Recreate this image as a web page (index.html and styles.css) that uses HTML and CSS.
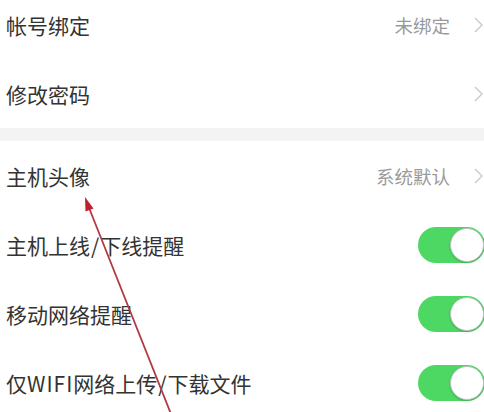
FILE: index.html
```html
<!DOCTYPE html>
<html lang="zh-CN">
<head>
<meta charset="utf-8">
<title>设置</title>
<link rel="stylesheet" href="styles.css">
</head>
<body>
<div class="page">
  <div class="group first">
    <div class="row">
      <span class="label">帐号绑定</span>
      <span class="value">未绑定</span>
      <svg class="chev" width="9" height="16" viewBox="0 0 9 16"><polyline points="1,1 8,8 1,15" fill="none" stroke="#c9c9cc" stroke-width="1.4"/></svg>
    </div>
    <div class="row">
      <span class="label">修改密码</span>
      <svg class="chev" width="9" height="16" viewBox="0 0 9 16"><polyline points="1,1 8,8 1,15" fill="none" stroke="#c9c9cc" stroke-width="1.4"/></svg>
    </div>
  </div>
  <div class="gap"></div>
  <div class="group">
    <div class="row">
      <span class="label">主机头像</span>
      <span class="value">系统默认</span>
      <svg class="chev" width="9" height="16" viewBox="0 0 9 16"><polyline points="1,1 8,8 1,15" fill="none" stroke="#c9c9cc" stroke-width="1.4"/></svg>
    </div>
    <div class="row">
      <span class="label">主机上线<span class="slash">/</span>下线提醒</span>
      <span class="toggle"><span class="knob"></span></span>
    </div>
    <div class="row">
      <span class="label">移动网络提醒</span>
      <span class="toggle"><span class="knob"></span></span>
    </div>
    <div class="row">
      <span class="label">仅<span class="latin">WIFI</span>网络上传<span class="slash">/</span>下载文件</span>
      <span class="toggle"><span class="knob"></span></span>
    </div>
  </div>
</div>
<svg class="arrow" width="484" height="412" viewBox="0 0 484 412">
  <line x1="89.5" y1="209" x2="171" y2="414" stroke="#b03a44" stroke-width="1.8"/>
  <polygon points="85,197 93.5,208.5 85.5,211.5" fill="#c0202e"/>
</svg>
</body>
</html>
```
FILE: styles.css
```css
html, body {
  margin: 0;
  padding: 0;
  background: #ffffff;
  overflow: hidden;
}
body {
  width: 484px;
  height: 412px;
  position: relative;
  font-family: "Noto Sans CJK SC", "Noto Sans", sans-serif;
}
.page {
  margin-top: -10px;
}
.row {
  display: flex;
  align-items: center;
  height: 69px;
  padding: 0 1px 0 6px;
}
.label {
  flex: 1;
  font-size: 21px;
  color: #333333;
  white-space: nowrap;
}
.slash {
  margin: 0 1px;
}
.latin {
  letter-spacing: 1px;
}
.value {
  font-size: 18.5px;
  color: #9a9a9a;
  margin-right: 24px;
}
.chev {
  display: block;
}
.gap {
  height: 13px;
  background: #f3f3f3;
}
.toggle {
  display: flex;
  justify-content: flex-end;
  align-items: center;
  width: 67px;
  height: 36px;
  margin-right: -2px;
  border-radius: 18px;
  background: #4cd862;
  box-sizing: border-box;
  padding: 1px;
}
.knob {
  width: 34px;
  height: 34px;
  border-radius: 50%;
  background: #ffffff;
  box-sizing: border-box;
  border: 1px solid #b9c4bb;
  box-shadow: 0 1px 2px rgba(0, 0, 0, 0.2);
}
.arrow {
  position: absolute;
  left: 0;
  top: 0;
  pointer-events: none;
}
```
